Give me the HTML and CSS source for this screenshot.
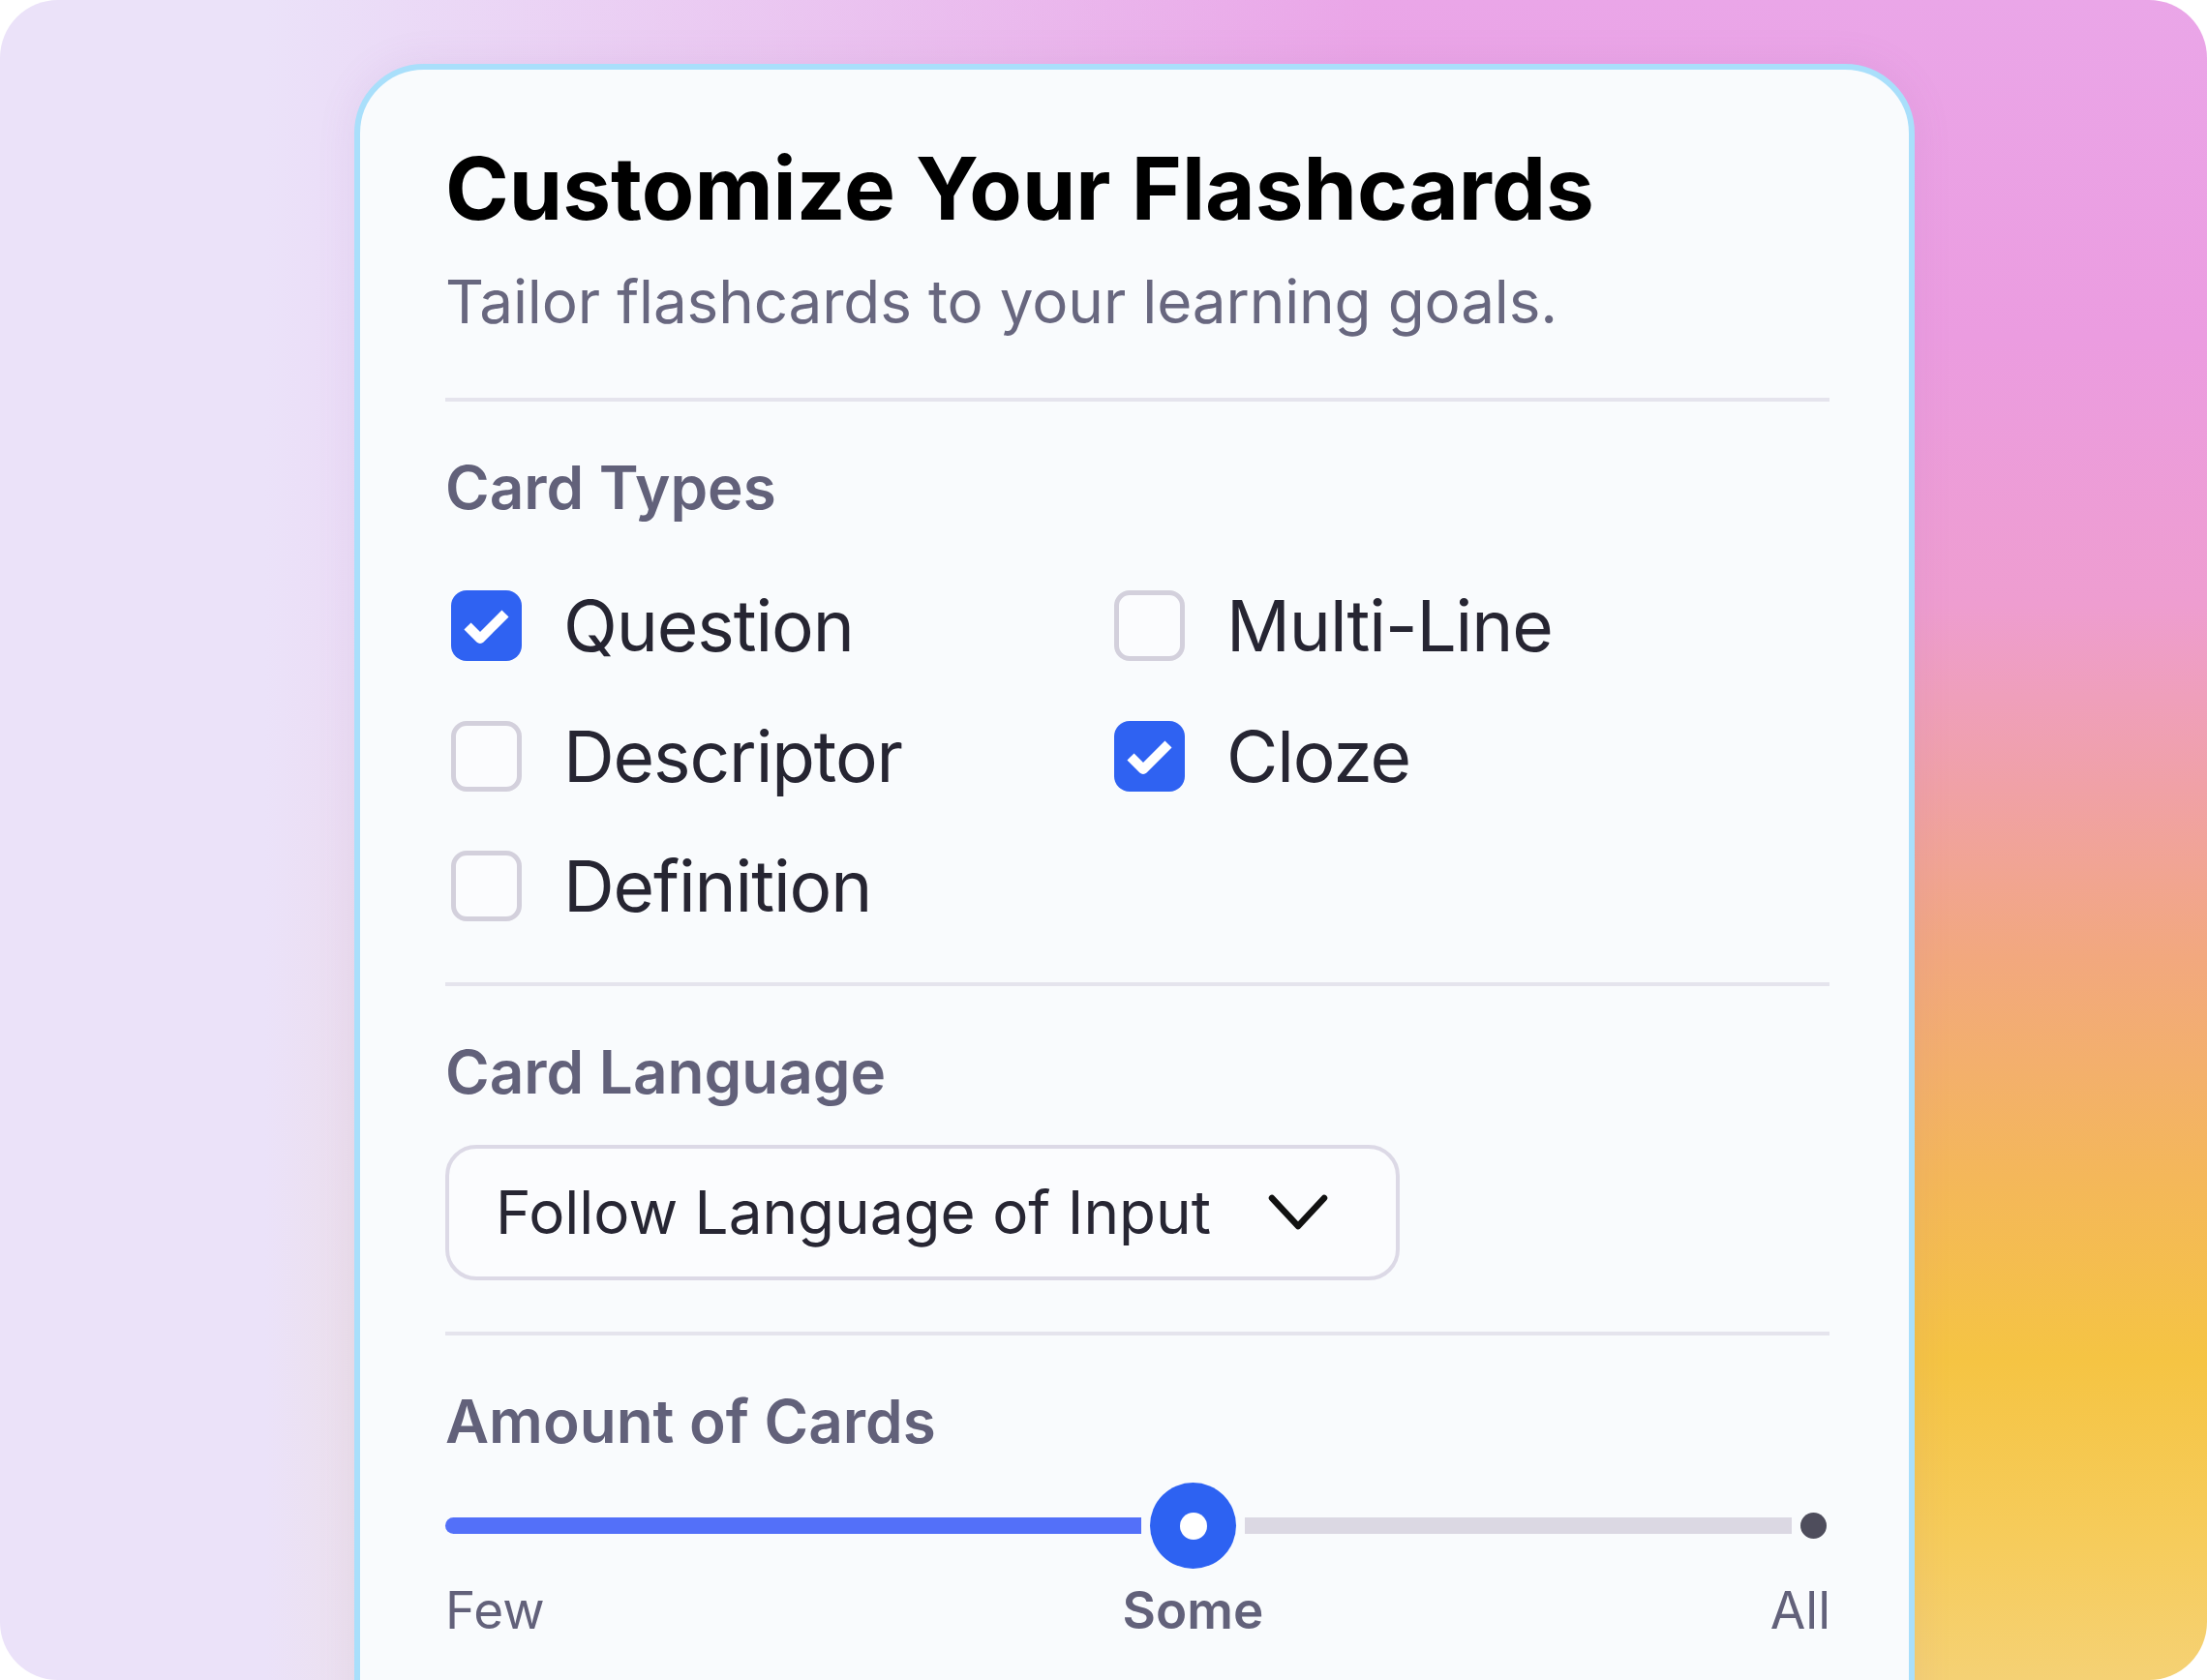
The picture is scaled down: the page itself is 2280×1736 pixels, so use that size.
FILE: index.html
```html
<!DOCTYPE html>
<html lang="en">
<head>
<meta charset="utf-8">
<title>Customize Your Flashcards</title>
<link rel="stylesheet" href="styles.css">
</head>
<body>
<div class="stage">
  <div class="card">
    <h1 class="title">Customize Your Flashcards</h1>
    <p class="subtitle">Tailor flashcards to your learning goals.</p>
    <hr class="divider">

    <section class="section">
      <h2 class="heading">Card Types</h2>
      <div class="types">
        <div class="type">
          <span class="box is-checked"><svg class="check" viewBox="0 0 73 73"><polyline points="17,37 30,50 56,24"/></svg></span>
          <span class="type-label">Question</span>
        </div>
        <div class="type">
          <span class="box"></span>
          <span class="type-label">Multi-Line</span>
        </div>
        <div class="type">
          <span class="box"></span>
          <span class="type-label">Descriptor</span>
        </div>
        <div class="type">
          <span class="box is-checked"><svg class="check" viewBox="0 0 73 73"><polyline points="17,37 30,50 56,24"/></svg></span>
          <span class="type-label">Cloze</span>
        </div>
        <div class="type">
          <span class="box"></span>
          <span class="type-label">Definition</span>
        </div>
      </div>
    </section>

    <hr class="divider divider-b">

    <section class="section">
      <h2 class="heading">Card Language</h2>
      <div class="select">
        <span class="select-value">Follow Language of Input</span>
        <svg class="chevron" viewBox="0 0 62 38"><polyline points="4,4 31,33 58,4"/></svg>
      </div>
    </section>

    <hr class="divider divider-c">

    <section class="section">
      <h2 class="heading">Amount of Cards</h2>
      <div class="slider">
        <span class="fill" style="width:719px"></span>
        <span class="thumb"><span class="thumb-dot"></span></span>
        <span class="track"></span>
        <span class="end-dot"></span>
        <span class="tick tick-few">Few</span>
        <span class="tick tick-some">Some</span>
        <span class="tick tick-all">All</span>
      </div>
    </section>
  </div>
</div>
</body>
</html>
```

FILE: styles.css
```css
html, body {
  margin: 0;
  padding: 0;
  background: #ffffff;
}

body {
  font-family: Inter, "Noto Sans", "DejaVu Sans", sans-serif;
  width: 2280px;
  height: 1736px;
  overflow: hidden;
}

.stage {
  box-sizing: border-box;
  width: 2280px;
  height: 1736px;
  border-radius: 60px;
  overflow: hidden;
  padding: 66px 0 0 366px;
  background-color: #ebe2f9;
  background-image:
    linear-gradient(to right, #ebe2f9 0%, #ebe2f9 12%, rgba(235, 226, 249, 0.55) 35%, rgba(235, 226, 249, 0) 62%),
    linear-gradient(to bottom, #eaa6e8 0%, #eb9ce0 20%, #ee9dd0 36%, #f0a1a6 47%, #f2a87e 57%, #f4b75a 70%, #f5c443 81%, #f6cc5c 92%, #f5d174 100%);
}

.card {
  box-sizing: border-box;
  width: 1612px;
  height: 1800px;
  border: 6px solid #a9dffb;
  border-radius: 72px;
  background: #f9fbfd;
  padding: 78px 82px 0 88px;
  box-shadow: 0 0 40px rgba(150, 100, 170, 0.10);
}

.title {
  margin: 0;
  font-size: 89px;
  line-height: 1;
  font-weight: 700;
  color: #000000;
  letter-spacing: 0;
}

.subtitle {
  margin: 42px 0 0;
  font-size: 62px;
  line-height: 1;
  font-weight: 400;
  color: #68677f;
  letter-spacing: -0.15px;
}

.divider {
  margin: 68px 0 0;
  height: 4px;
  border: 0;
  background: #e5e4ed;
}

.divider-b {
  margin-top: 63px;
}

.divider-c {
  margin-top: 53px;
}

.section {
  margin: 0;
}

.heading {
  margin: 58px 0 0;
  font-size: 62px;
  line-height: 1;
  font-weight: 600;
  color: #62617a;
}

.types {
  margin-top: 75px;
  padding-left: 6px;
  display: grid;
  grid-template-columns: 685px 1fr;
  row-gap: 61.5px;
}

.type {
  display: flex;
  align-items: center;
  gap: 43px;
  height: 73px;
}

.box {
  box-sizing: border-box;
  flex: none;
  width: 73px;
  height: 73px;
  border: 5px solid #d3d0dc;
  border-radius: 16px;
  background: #fbfcfe;
  display: flex;
  align-items: center;
  justify-content: center;
}

.box.is-checked {
  border: 0;
  background: #2f62f2;
}

.check {
  width: 73px;
  height: 73px;
  display: block;
}

.check polyline {
  fill: none;
  stroke: #ffffff;
  stroke-width: 10;
  stroke-linejoin: round;
  stroke-linecap: butt;
}

.type-label {
  font-size: 73px;
  line-height: 1;
  color: #262532;
  letter-spacing: -0.015em;
}

.select {
  box-sizing: border-box;
  margin-top: 44px;
  width: 986px;
  height: 140px;
  border: 4px solid #dcd9e6;
  border-radius: 32px;
  background: #fbfcfe;
  padding: 0 70px 0 48px;
  display: flex;
  align-items: center;
  justify-content: space-between;
}

.select-value {
  font-size: 62px;
  line-height: 1;
  color: #272633;
  letter-spacing: 0;
}

.chevron {
  width: 62px;
  height: 38px;
  display: block;
}

.chevron polyline {
  fill: none;
  stroke: #111111;
  stroke-width: 6.5;
  stroke-linecap: round;
  stroke-linejoin: round;
}

.slider {
  margin-top: 32px;
  width: 1427px;
  display: grid;
  grid-template-columns: 719px 89px 1fr 27px;
  grid-template-rows: 89px auto;
  column-gap: 9px;
  row-gap: 17px;
  align-items: center;
}

.fill {
  grid-column: 1;
  grid-row: 1;
  height: 17px;
  border-radius: 9px 0 0 9px;
  background: #5370f9;
}

.thumb {
  grid-column: 2;
  grid-row: 1;
  width: 89px;
  height: 89px;
  border-radius: 50%;
  background: #2d62f2;
  display: flex;
  align-items: center;
  justify-content: center;
}

.thumb-dot {
  width: 28px;
  height: 28px;
  border-radius: 50%;
  background: #ffffff;
}

.track {
  grid-column: 3;
  grid-row: 1;
  height: 17px;
  background: #dbd8e3;
}

.end-dot {
  grid-column: 4;
  grid-row: 1;
  width: 27px;
  height: 27px;
  border-radius: 50%;
  background: #4e4d5c;
}

.tick {
  grid-row: 2;
  font-size: 53px;
  line-height: 1;
  color: #62617a;
  white-space: nowrap;
}

.tick-few {
  grid-column: 1;
  justify-self: start;
}

.tick-some {
  grid-column: 2;
  justify-self: center;
  font-weight: 600;
}

.tick-all {
  grid-column: 3 / 5;
  justify-self: end;
  margin-right: -4px;
}
```
